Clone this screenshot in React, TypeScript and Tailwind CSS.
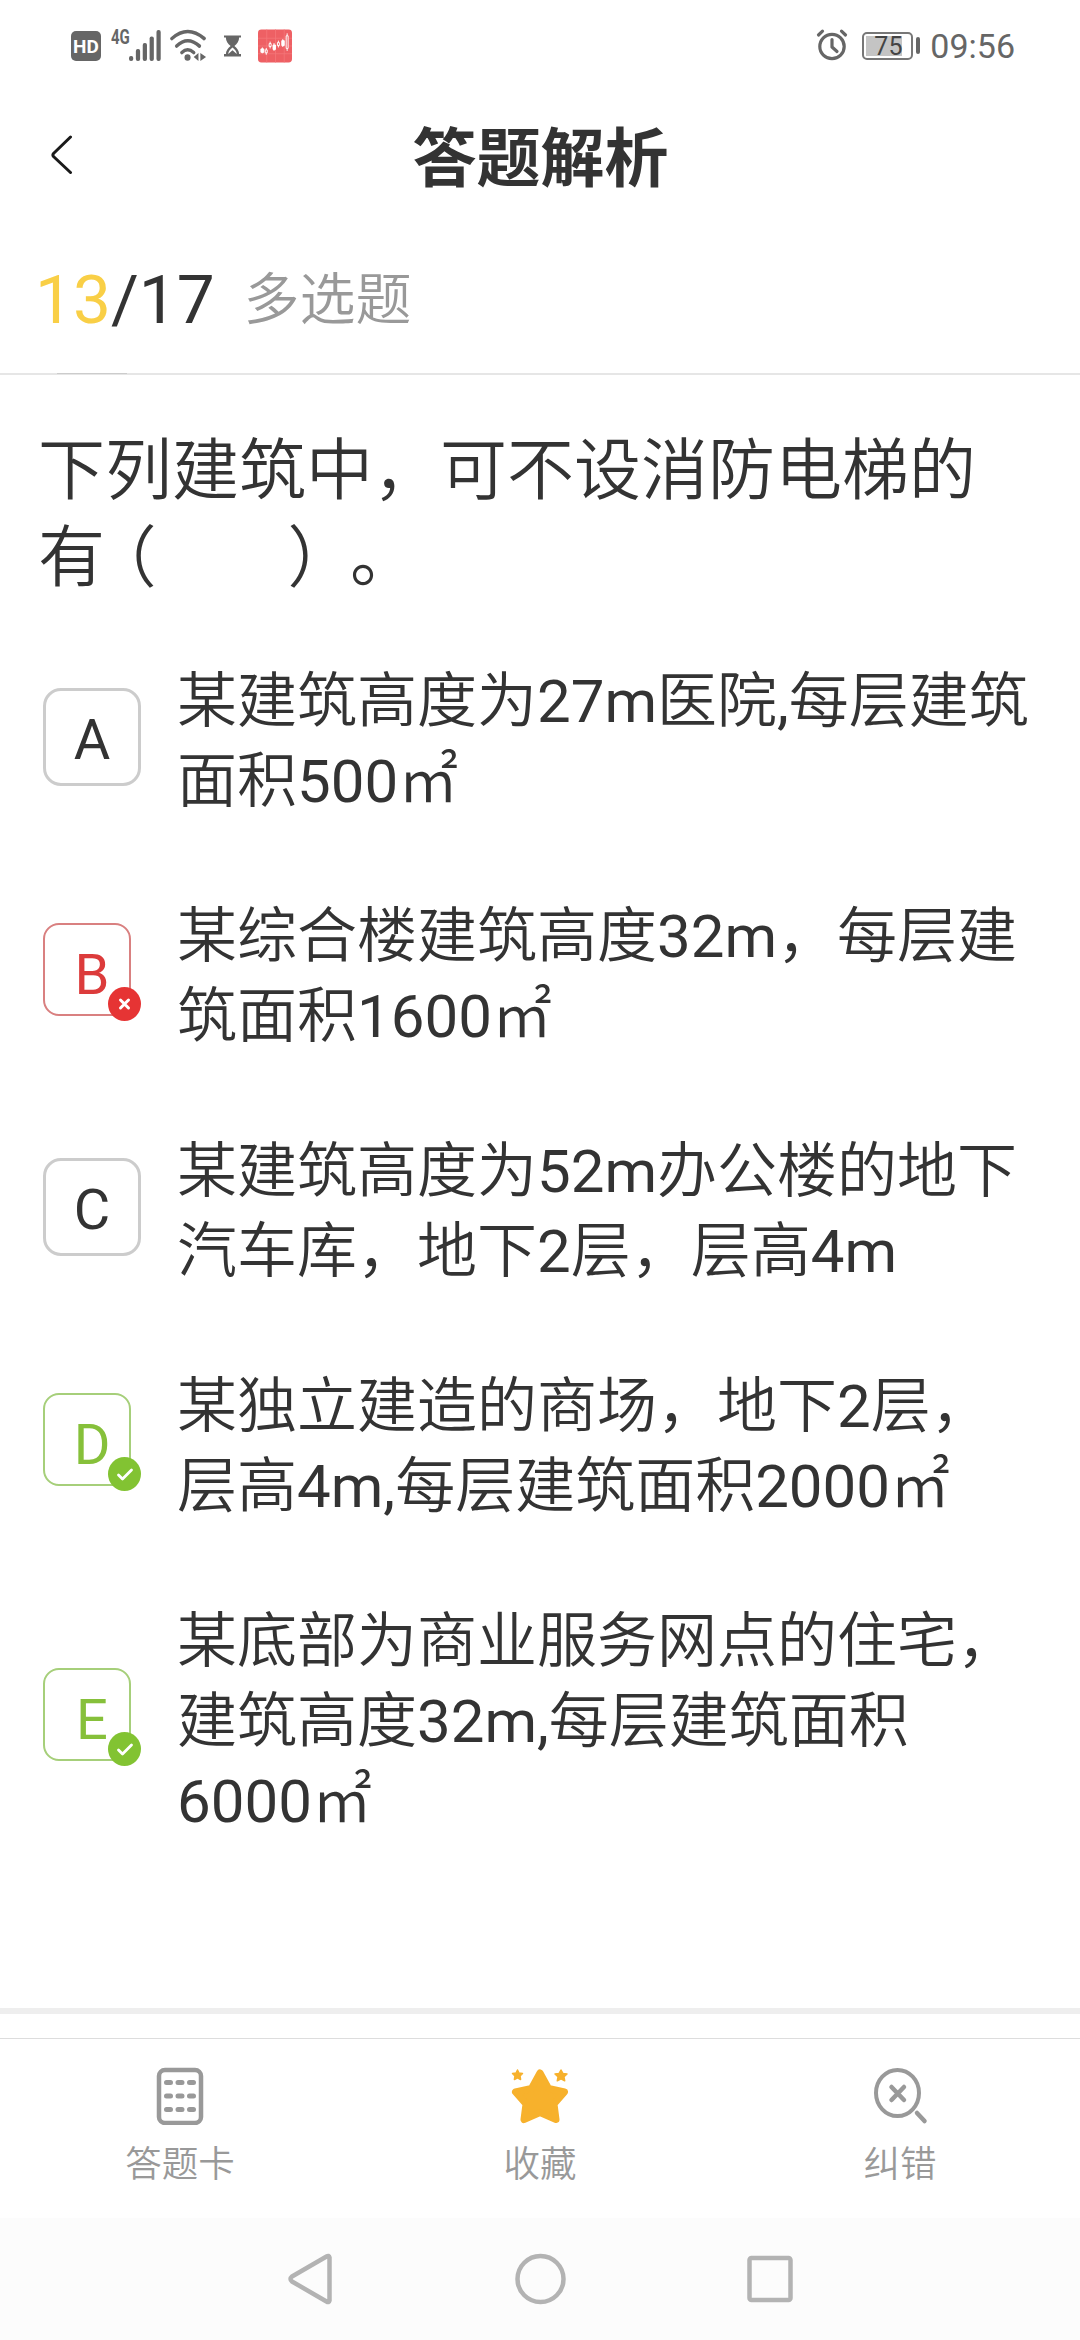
import type { ReactNode } from "react";

type OptionState = "default" | "wrong" | "correct";

interface Option {
	letter: string;
	state: OptionState;
	lines: string[];
}

const options: Option[] = [
	{ letter: "A", state: "default", lines: ["某建筑高度为27m医院,每层建筑", "面积500㎡"] },
	{ letter: "B", state: "wrong", lines: ["某综合楼建筑高度32m，每层建", "筑面积1600㎡"] },
	{ letter: "C", state: "default", lines: ["某建筑高度为52m办公楼的地下", "汽车库，地下2层，层高4m"] },
	{ letter: "D", state: "correct", lines: ["某独立建造的商场，地下2层，", "层高4m,每层建筑面积2000㎡"] },
	{ letter: "E", state: "correct", lines: ["某底部为商业服务网点的住宅，", "建筑高度32m,每层建筑面积", "6000㎡"] },
];

function StatusBar() {
	return (
		<div className="flex h-[90px] items-start justify-between pl-[71px] pr-[65px] pt-[28px] text-[#666666]">
			<div className="flex items-start">
				<span className="mt-[3px] flex h-[30px] w-[30px] items-center justify-center rounded-[5px] bg-[#666666] text-[19px] font-bold leading-none text-white">
					HD
				</span>
				<span className="ml-[10px] h-[18px] w-[18px] origin-left scale-x-[0.75] text-[20px] font-bold leading-[18px]">4G</span>
				<svg width="32" height="34" viewBox="0 0 34 34" preserveAspectRatio="none" fill="currentColor">
					<rect x="0" y="28" width="4.5" height="5" rx="2" />
					<rect x="7.3" y="21" width="4.5" height="12" rx="2" />
					<rect x="14.6" y="15" width="4.5" height="18" rx="2" />
					<rect x="21.9" y="8.5" width="4.5" height="24.5" rx="2" />
					<rect x="29.2" y="2" width="4.5" height="31" rx="2" />
				</svg>
				<svg className="ml-[9px]" width="37" height="34" viewBox="0 0 39 34" preserveAspectRatio="none" fill="none" stroke="currentColor" strokeWidth="3.6" strokeLinecap="round">
					<path d="M2 10.500Q18.500-3.500 36 10.500" />
					<path d="M7 18Q18.500 7.500 31 18" />
					<path d="M12.500 24.500Q18.500 19 25 24.500" />
					<circle cx="18.5" cy="29.5" r="3.2" fill="currentColor" stroke="none" />
					<path d="M30 25v8l-5-4zM32 25v8l6-4z" fill="currentColor" stroke="none" />
				</svg>
				<svg className="ml-[17px] mt-[6px]" width="17" height="24" viewBox="0 0 18 24" fill="currentColor">
					<path d="M0 1h18v2h-2c0 4-2 6.500-5 9 3 2.500 5 5 5 8.500h2V23H0v-2.500h2C2 17 4 14.500 7 12 4 9.500 2 7 2 3H0z" />
					<path d="M4.500 20.500c0-3 2-5 4.500-7 2.500 2 4.500 4 4.500 7L9 16.500z" fill="#fff" />
				</svg>
				<svg className="ml-[17px] mt-px" width="34" height="34" viewBox="0 0 35 34">
					<rect width="35" height="34" rx="3.5" fill="#ee6064" />
					<path d="M9 0v34M18 0v34M27 0v34M0 9h35M0 17h35M0 25h35" stroke="#f4777a" strokeWidth="0.8" />
					<g stroke="#fff" strokeWidth="1" fill="none">
						<path d="M4.500 18.500v6M8.500 19v7M12.500 12.500v7M16.500 14v8M21 11.500v7M25.500 10v8M30 4v18" />
						<path d="M3 20h3v3.500H3zM15.500 16h2.500v4.500h-2.500zM24.500 11.500h2.500v5h-2.500z" fill="#fff" />
						<path d="M7.500 21h2v3h-2zM11.500 14.500h2v3h-2zM20 13.500h2v3h-2zM29 6.500h2v13h-2z" fill="#ee6064" />
					</g>
				</svg>
			</div>
			<div className="flex items-start">
				<svg width="34" height="34" viewBox="0 0 34 34" fill="none" stroke="currentColor" strokeWidth="3.2">
					<circle cx="17" cy="18.5" r="12.2" />
					<path d="M17 11.500v7.500l5 4.500" strokeLinecap="round" strokeLinejoin="round" />
					<path d="M3.500 7l4-3.800M30.500 7l-4-3.800" strokeLinecap="round" />
				</svg>
				<div className="ml-[13px] mt-[4px] flex h-[28px] w-[51px] rounded-[5px] border-2 border-[#777777] p-[2px]">
					<span className="flex w-[36px] items-center bg-[#c4c4c4] pl-[8px] text-[25px] leading-none text-[#444444]">75</span>
				</div>
				<span className="ml-[3px] mt-[9px] h-[17px] w-[4px] rounded-[2px] bg-[#666666]" />
				<span className="ml-[10px] text-[34px] leading-[37px]">09:56</span>
			</div>
		</div>
	);
}

function Header() {
	return (
		<header className="flex h-[134px] items-center pl-[50px]">
			<svg className="mb-[4px]" width="24" height="40" viewBox="0 0 24 40" fill="none" stroke="#1a1a1a" strokeWidth="3" strokeLinecap="round" strokeLinejoin="round">
				<path d="M20.500 2L3.500 18.500Q2.300 20 3.500 21.500L20.500 37.500" />
			</svg>
			<h1 className="mr-[73px] flex-1 pb-[9px] text-center font-['Noto_Sans_CJK_SC',sans-serif] text-[64px] font-bold leading-none">答题解析</h1>
		</header>
	);
}

function Progress() {
	return (
		<div>
			<div className="flex h-[149px] items-center pl-[35px] pt-[3px]">
				<p className="text-[67.5px] leading-none">
					<span className="text-[#f9cf46]">13</span>/17
				</p>
				<p className="ml-[29px] text-[56px] leading-none text-[#999999]">多选题</p>
			</div>
			<div className="h-[2px] bg-[#e6e6e6] pl-[57px]">
				<div className="h-px w-[70px] bg-[#cccccc]" />
			</div>
		</div>
	);
}

function OptionBadge({ state }: { state: OptionState }) {
	return (
		<svg className="absolute bottom-0 right-0" width="33" height="34" viewBox="0 0 33 34" fill="none" strokeLinecap="round" strokeLinejoin="round">
			{state === "wrong" ? (
				<>
					<ellipse cx="16.5" cy="17" rx="16.5" ry="17" fill="#e63434" />
					<path d="M12.500 13l8 8M20.500 13l-8 8" stroke="#fff" strokeWidth="3" />
				</>
			) : (
				<>
					<ellipse cx="16.5" cy="17" rx="16.5" ry="17" fill="#82c332" />
					<path d="M10.500 18l4 4 9-9" stroke="#fff" strokeWidth="2.8" />
				</>
			)}
		</svg>
	);
}

function OptionBox({ letter, state }: { letter: string; state: OptionState }) {
	if (state === "default") {
		return (
			<div className="mb-[10px] flex h-[98px] w-[98px] items-center justify-center rounded-[18px] border-[3px] border-[#cccccc] text-[56px] leading-none">
				<span className="mt-[6px]">{letter}</span>
			</div>
		);
	}
	const wrong = state === "wrong";
	return (
		<div className="relative mb-[10px] h-[98px] w-[98px]">
			<div
				className={`flex h-[93px] w-[88px] justify-center rounded-[16px] border-2 pl-[10px] pt-[22px] text-[56px] leading-none ${
					wrong ? "border-[#d98080] text-[#dc3b3b]" : "border-[#a6cf7a] text-[#86c03a]"
				}`}
			>
				{letter}
			</div>
			<OptionBadge state={state} />
		</div>
	);
}

function OptionRow({ option }: { option: Option }) {
	return (
		<li className="flex items-center pb-[75px] pl-[43px]">
			<OptionBox letter={option.letter} state={option.state} />
			<div className="ml-[36px] whitespace-nowrap text-[60px] leading-[80px]">
				{option.lines.map((line) => (
					<p key={line}>{line}</p>
				))}
			</div>
		</li>
	);
}

function Tab({ label, children }: { label: string; children: ReactNode }) {
	return (
		<button className="flex flex-1 flex-col items-center pt-[28px] text-[36.5px] leading-none text-[#999999]">
			{children}
			<span className="mt-[22px]">{label}</span>
		</button>
	);
}

function TabBar() {
	return (
		<nav className="flex h-[180px] border-t border-[#dddddd]">
			<Tab label="答题卡">
				<svg width="48" height="58" viewBox="0 0 48 58" fill="none" stroke="#999999">
					<rect x="3" y="3" width="42" height="53" rx="6" strokeWidth="4.5" />
					<path d="M10.500 15.500h4M22 15.500h4M33.500 15.500h4M10.500 29h4M22 29h4M33.500 29h4M10.500 42.500h4M22 42.500h4M33.500 42.500h4" strokeWidth="5" strokeLinecap="round" />
				</svg>
			</Tab>
			<Tab label="收藏">
				<svg width="58" height="58" viewBox="0 0 58 58" fill="#f7b12c" stroke="#f7b12c" strokeLinejoin="round">
					<path d="M29 6L37.500 21.500L53.500 25L43 37L45 52.500L29 45.500L13 52.500L15 37L4.500 25L20.500 21.500Z" strokeWidth="7" />
					<path d="M6.500 3l1.500 3 3.500.500-2.500 2.500.600 3.500-3.100-1.600-3.100 1.600.600-3.500L1.500 6.500 5 6zM50 3l1.900 3.400 4.100.600-3 2.800.700 4-3.700-1.900-3.700 1.900.700-4-3-2.800 4.100-.600z" strokeWidth="1.5" />
				</svg>
			</Tab>
			<Tab label="纠错">
				<svg width="58" height="58" viewBox="0 0 58 58" fill="none" stroke="#999999" strokeLinecap="round">
					<ellipse cx="26.5" cy="26" rx="21.5" ry="23" strokeWidth="4" />
					<path d="M20.500 20l12.500 13M33 20L20.500 33" strokeWidth="4.5" />
					<path d="M46 46l7.500 8" strokeWidth="4.5" />
				</svg>
			</Tab>
		</nav>
	);
}

function SystemNav() {
	return (
		<div className="flex h-[122px] items-center justify-center bg-[#fcfcfc]">
			<svg width="505" height="54" viewBox="0 0 505 54" fill="none" stroke="#b3b3b3" strokeWidth="4.5" strokeLinejoin="round">
				<path d="M41.500 5.500V48.500Q41 51 38.500 49.500L4 29.500Q1 27 4 24.500L38.500 4.500Q41 3 41.500 5.500Z" />
				<circle cx="252.5" cy="27" r="23" />
				<rect x="461.5" y="6" width="41" height="42" rx="2" />
			</svg>
		</div>
	);
}

export default function App() {
	return (
		<div className="flex h-[2340px] w-[1080px] flex-col overflow-hidden bg-white font-[Roboto,'Noto_Sans_CJK_SC_DemiLight','Noto_Sans_CJK_SC',sans-serif] text-[#333333] [text-spacing-trim:space-all]">
			<StatusBar />
			<Header />
			<Progress />

			<main className="flex-1">
				<h2 className="whitespace-nowrap pl-[38px] pt-[53px] text-[67px] font-normal leading-[87px]">
					下列建筑中，可不设消防电梯的
					<br />
					有<span className="ml-[18px] mr-[15px] [font-feature-settings:'halt']">（</span>
					<span className="inline-block w-[101px]" />
					<span className="ml-[15px] mr-[29px] [font-feature-settings:'halt']">）</span>。
				</h2>
				<ul className="pt-[60px]">
					{options.map((option) => (
						<OptionRow key={option.letter} option={option} />
					))}
				</ul>
			</main>

			<div className="mb-[24px] h-[6px] bg-[#eeeeee]" />
			<TabBar />
			<SystemNav />
		</div>
	);
}
